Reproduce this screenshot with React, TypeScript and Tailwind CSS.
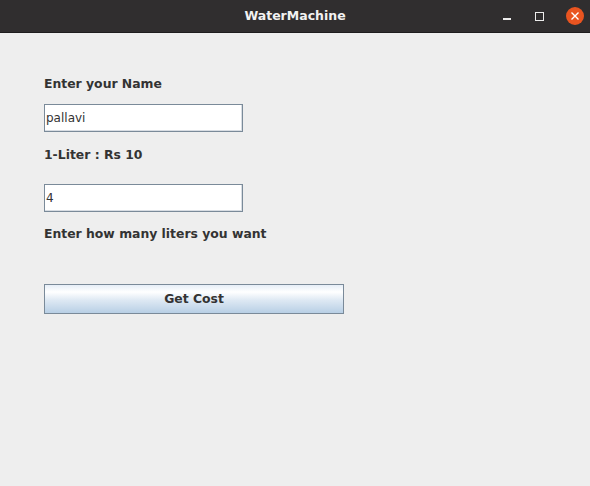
export default function App() {
  return (
    <div className="flex h-[486px] w-[590px] flex-col bg-[#eeeeee] font-['DejaVu_Sans',sans-serif]">
      <div className="relative flex h-[33px] shrink-0 items-center justify-center border-b border-[#1e1d1e] bg-[#302e2f]">
        <span className="text-[12.5px] font-bold text-[#f2f2f2]">WaterMachine</span>
        <div className="absolute right-[6px] top-0 flex h-[32px] items-center">
          <span className="mr-[24px] mt-[6px] block h-[1.5px] w-[8px] bg-[#ececec]" />
          <span className="mr-[22px] block h-[9px] w-[9px] border border-[#ececec]" />
          <span className="flex h-[18px] w-[18px] items-center justify-center rounded-full bg-[#e95420]">
            <svg width="10" height="10" viewBox="0 0 10 10">
              <path d="M1.5 1.5 L8.5 8.5 M8.5 1.5 L1.5 8.5" stroke="#ffffff" strokeWidth="1.4" />
            </svg>
          </span>
        </div>
      </div>

      <div className="flex flex-col pl-[44px] text-[12.4px] text-[#333333]">
        <div className="mt-[43px] h-[16px] font-bold leading-[16px]">Enter your Name</div>
        <div className="mt-[12px] flex h-[28px] w-[199px] items-center border border-[#7a8a99] bg-white pl-[1px] text-[12px] shadow-[inset_-1px_-1px_0_#d8dde3]">
          pallavi
        </div>
        <div className="mt-[15px] h-[16px] font-bold leading-[16px]">1-Liter : Rs 10</div>
        <div className="mt-[21px] flex h-[28px] w-[199px] items-center border border-[#7a8a99] bg-white pl-[1px] text-[12px] shadow-[inset_-1px_-1px_0_#d8dde3]">
          4
        </div>
        <div className="mt-[14px] h-[16px] font-bold leading-[16px]">Enter how many liters you want</div>
        <button className="mt-[42px] flex h-[30px] w-[300px] items-center justify-center border border-[#7a8a99] bg-[linear-gradient(to_bottom,#e6eef7_0%,#ffffff_25%,#dde8f3_55%,#b8cfe5_100%)] font-bold text-[#333333]">
          Get Cost
        </button>
      </div>
    </div>
  );
}
